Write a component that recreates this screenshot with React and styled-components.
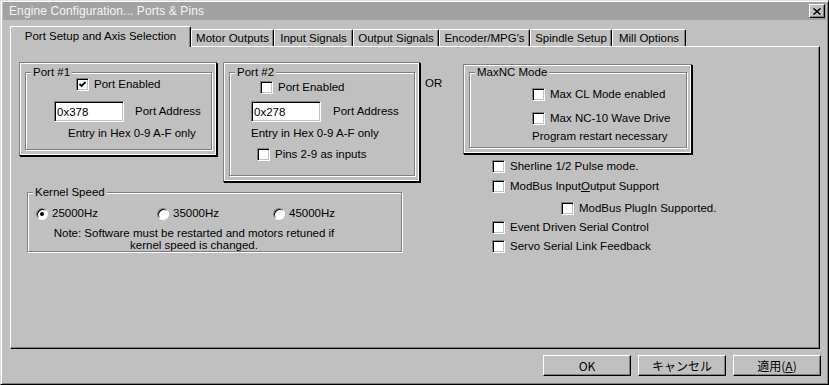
import React from 'react'
import styled, {createGlobalStyle} from 'styled-components'

const GlobalStyle = createGlobalStyle`
  html, body { margin: 0; padding: 0; background: #c0c0c0; }
  body {
    font-family: "Liberation Sans", "Noto Sans CJK JP", Arial, sans-serif;
    font-size: 11.5px;
    color: #000;
  }
`

const Window = styled.div`
  box-sizing: border-box;
  width: 829px;
  height: 385px;
  background: #c0c0c0;
  border: 1px solid;
  border-color: #dfdfdf #000 #000 #dfdfdf;
  box-shadow: inset 1px 1px #fff, inset -1px -1px #808080;
  padding: 1px 2px 2px 2px;
  display: flex;
  flex-direction: column;
`

const TitleBar = styled.div`
  height: 18px;
  background: #a2a2a2;
  display: flex;
  align-items: center;
  justify-content: space-between;
  padding: 0 1px 0 6px;
`

const TitleText = styled.span`
  color: #f4f4f4;
  font-size: 12px;
  letter-spacing: 0.1px;
`

const CloseBtn = styled.div`
  box-sizing: border-box;
  width: 16px;
  height: 14px;
  background: #c0c0c0;
  border: 1px solid;
  border-color: #fff #000 #000 #fff;
  box-shadow: inset -1px -1px #808080;
  display: flex;
  align-items: center;
  justify-content: center;
`

const TabStrip = styled.div`
  display: flex;
  align-items: flex-end;
  height: 20px;
  margin: 6px 0 0 7px;
  position: relative;
  z-index: 2;
`

const Tab = styled.div`
  box-sizing: border-box;
  width: ${p => p.w}px;
  height: ${p => (p.active ? 21 : 17)}px;
  margin-bottom: ${p => (p.active ? -1 : 0)}px;
  background: #c0c0c0;
  border-top: 1px solid #fff;
  border-left: 1px solid #fff;
  border-right: 1px solid #000;
  box-shadow: inset -1px 0 #808080;
  border-radius: 2px 2px 0 0;
  display: flex;
  align-items: center;
  justify-content: center;
  padding-bottom: ${p => (p.active ? 2 : 0)}px;
  white-space: nowrap;
`

const Panel = styled.div`
  box-sizing: border-box;
  width: 810px;
  height: 303px;
  margin-left: 7px;
  border: 1px solid;
  border-color: #fff #000 #000 #fff;
  box-shadow: inset -1px -1px #808080;
  padding: 15px 0 0 8px;
  display: flex;
  align-items: flex-start;
`

const LeftCol = styled.div`
  width: 401px;
  display: flex;
  flex-direction: column;
`

const PortRow = styled.div`
  display: flex;
  align-items: flex-start;
  gap: 6px;
`

const Frame = styled.div`
  box-sizing: border-box;
  width: ${p => p.w}px;
  height: ${p => p.h}px;
  border: 1px solid;
  border-color: #808080 #000 #000 #808080;
  box-shadow: inset 1px 1px #fff, inset -1px -1px #fff, 1px 1px #000;
  padding: ${p => p.pt}px 4px 5px 5px;
  display: flex;
`

const Group = styled.div`
  box-sizing: border-box;
  flex: ${p => (p.w ? 'none' : 1)};
  width: ${p => (p.w ? `${p.w}px` : 'auto')};
  height: ${p => (p.h ? `${p.h}px` : 'auto')};
  margin: ${p => p.m || 0};
  border: 1px solid #808080;
  box-shadow: inset 1px 1px #fff, 1px 1px #fff;
  display: flex;
  flex-direction: column;
  align-items: flex-start;
`

const Legend = styled.span`
  display: block;
  line-height: 13px;
  height: 13px;
  margin: -7px 0 -6px 5px;
  padding: 0 2px;
  background: #c0c0c0;
`

const Row = styled.div`
  display: flex;
  align-items: center;
  gap: ${p => p.gap ?? 5}px;
  margin-top: ${p => p.mt || 0}px;
  margin-left: ${p => p.ml || 0}px;
  line-height: 13px;
  white-space: nowrap;
`

const Text = styled.div`
  line-height: 13px;
  margin-top: ${p => p.mt || 0}px;
  margin-left: ${p => p.ml || 0}px;
  white-space: nowrap;
`

const Box = styled.span`
  box-sizing: border-box;
  flex: none;
  width: 13px;
  height: 13px;
  background: #fff;
  border: 1px solid;
  border-color: #808080 #fff #fff #808080;
  box-shadow: inset 1px 1px #000, inset -1px -1px #c0c0c0;
  display: flex;
  align-items: center;
  justify-content: center;
`

const RadioDot = styled.span`
  box-sizing: border-box;
  flex: none;
  width: 12px;
  height: 12px;
  border-radius: 50%;
  background: #fff;
  border: 1px solid;
  border-color: #808080 #fff #fff #808080;
  box-shadow: inset 1px 1px #000;
  display: flex;
  align-items: center;
  justify-content: center;
  &::after {
    content: '';
    width: 4px;
    height: 4px;
    border-radius: 50%;
    background: ${p => (p.on ? '#000' : 'transparent')};
  }
`

const Field = styled.input`
  box-sizing: border-box;
  width: 70px;
  height: 21px;
  margin: 0;
  padding: 0 2px;
  font: inherit;
  color: #000;
  background: #fff;
  border: 1px solid;
  border-color: #808080 #fff #fff #808080;
  box-shadow: inset 1px 1px #000, inset -1px -1px #c0c0c0;
  outline: none;
`

const Or = styled.div`
  width: 38px;
  margin: 15px 0 0 5px;
  line-height: 13px;
`

const RightCol = styled.div`
  display: flex;
  flex-direction: column;
  margin-top: 2px;
`

const CheckList = styled.div`
  display: flex;
  flex-direction: column;
  margin: 6px 0 0 29px;
`

const Option = styled.div`
  flex: none;
  width: ${p => p.w}px;
  display: flex;
  align-items: center;
  gap: 4px;
  line-height: 13px;
`

const Note = styled.div`
  width: 282px;
  margin: 7px 0 0 25px;
  line-height: 12px;
  text-align: center;
  white-space: nowrap;
`

const ButtonRow = styled.div`
  display: flex;
  justify-content: flex-end;
  gap: 7px;
  margin-top: 6px;
  padding-right: 5px;
`

const Button = styled.div`
  box-sizing: border-box;
  width: 88px;
  height: 21px;
  background: #c0c0c0;
  border: 1px solid;
  border-color: #fff #000 #000 #fff;
  box-shadow: inset -1px -1px #808080;
  display: flex;
  align-items: center;
  justify-content: center;
  font-family: "Noto Sans CJK JP", "Liberation Sans", sans-serif;
  font-size: 12px;
`

const Check = ({on}) => (
  <Box>
    {on && (
      <svg width="9" height="9" viewBox="0 0 9 9">
        <polyline points="1.5,4 3.5,6 7.5,2" fill="none" stroke="#000" strokeWidth="1.8" />
      </svg>
    )}
  </Box>
)

const CheckRow = ({label, on, ml, mt}) => (
  <Row ml={ml} mt={mt}>
    <Check on={on} />
    <span>{label}</span>
  </Row>
)

const tabs = [
  {label: 'Port Setup and Axis Selection', w: 181, active: true},
  {label: 'Motor Outputs', w: 83},
  {label: 'Input Signals', w: 79},
  {label: 'Output Signals', w: 86},
  {label: "Encoder/MPG's", w: 91},
  {label: 'Spindle Setup', w: 82},
  {label: 'Mill Options', w: 74},
]

const App = () => {
  return (
    <Window>
      <GlobalStyle />
      <TitleBar>
        <TitleText>Engine Configuration... Ports &amp; Pins</TitleText>
        <CloseBtn>
          <svg width="8" height="7" viewBox="0 0 8 7">
            <path d="M0.5 0.5 L7.5 6.5 M7.5 0.5 L0.5 6.5" stroke="#000" strokeWidth="1.5" />
          </svg>
        </CloseBtn>
      </TitleBar>

      <TabStrip>
        {tabs.map(t => (
          <Tab key={t.label} w={t.w} active={t.active}>{t.label}</Tab>
        ))}
      </TabStrip>

      <Panel>
        <LeftCol>
          <PortRow>
            <Frame w={198} h={94} pt={9}>
              <Group>
                <Legend>Port #1</Legend>
                <CheckRow label="Port Enabled" on ml={50} mt={5} />
                <Row gap={11} ml={28} mt={10}>
                  <Field readOnly value="0x378" />
                  <span>Port Address</span>
                </Row>
                <Text ml={42} mt={5}>Entry in Hex 0-9 A-F only</Text>
              </Group>
            </Frame>
            <Frame w={197} h={120} pt={9}>
              <Group>
                <Legend>Port #2</Legend>
                <CheckRow label="Port Enabled" ml={30} mt={8} />
                <Row gap={12} ml={21} mt={7}>
                  <Field readOnly value="0x278" />
                  <span>Port Address</span>
                </Row>
                <Text ml={21} mt={5}>Entry in Hex 0-9 A-F only</Text>
                <CheckRow label="Pins 2-9 as inputs" ml={27} mt={8} />
              </Group>
            </Frame>
          </PortRow>

          <Group w={375} h={60} m="10px 0 0 8px">
            <Legend>Kernel Speed</Legend>
            <Row gap={0} ml={8} mt={14}>
              <Option w={121}><RadioDot on /><span>25000Hz</span></Option>
              <Option w={116}><RadioDot /><span>35000Hz</span></Option>
              <Option w={90}><RadioDot /><span>45000Hz</span></Option>
            </Row>
            <Note>
              Note: Software must be restarted and motors retuned if<br />
              kernel speed is changed.
            </Note>
          </Group>
        </LeftCol>

        <Or>OR</Or>

        <RightCol>
          <Frame w={229} h={90} pt={7}>
            <Group>
              <Legend>MaxNC Mode</Legend>
              <CheckRow label="Max CL Mode enabled" ml={62} mt={15} />
              <CheckRow label="Max NC-10 Wave Drive" ml={62} mt={11} />
              <Text ml={62} mt={5}>Program restart necessary</Text>
            </Group>
          </Frame>
          <CheckList>
            <CheckRow label="Sherline 1/2 Pulse mode." />
            <CheckRow mt={7} label={<>ModBus Input<u>O</u>utput Support</>} />
            <CheckRow mt={9} ml={69} label="ModBus PlugIn Supported." />
            <CheckRow mt={6} label="Event Driven Serial Control" />
            <CheckRow mt={6} label="Servo Serial Link Feedback" />
          </CheckList>
        </RightCol>
      </Panel>

      <ButtonRow>
        <Button>OK</Button>
        <Button>キャンセル</Button>
        <Button>適用(<u>A</u>)</Button>
      </ButtonRow>
    </Window>
  )
}

export default App
